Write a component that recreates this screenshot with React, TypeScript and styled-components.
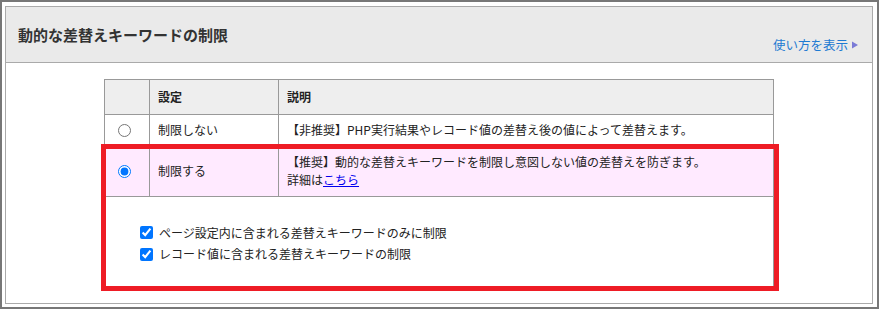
import React from "react";
import styled, { createGlobalStyle } from "styled-components";

const GlobalStyle = createGlobalStyle`
  html, body {
    margin: 0;
    background: #fff;
  }
  body {
    font-family: "Noto Sans CJK JP", "Noto Sans", sans-serif;
    color: #222;
  }
`;

const Frame = styled.div`
  width: 879px;
  height: 309px;
  box-sizing: border-box;
  border: 2px solid #777;
  padding: 4px 4px 3px 3px;
`;

const Panel = styled.section`
  height: 100%;
  box-sizing: border-box;
  border: 1px solid #aaa;
  display: flex;
  flex-direction: column;
`;

const PanelHeader = styled.header`
  height: 55px;
  flex: none;
  background: #eaeaea;
  border-bottom: 1px solid #aaa;
  display: flex;
  justify-content: space-between;
  padding: 0 14px 0 12px;
`;

const Title = styled.h2`
  margin: 0;
  align-self: center;
  font-size: 15px;
  font-weight: bold;
  color: #333;
`;

const HelpLink = styled.a`
  align-self: flex-end;
  margin-bottom: 8px;
  display: flex;
  align-items: center;
  gap: 4px;
  font-size: 12.5px;
  line-height: 18px;
  color: #1e7ad2;
  text-decoration: none;
  cursor: pointer;
`;

const PanelBody = styled.div`
  padding-top: 16px;
  display: flex;
  justify-content: center;
`;

const TableWrap = styled.div`
  position: relative;
`;

const Table = styled.table`
  width: 670px;
  table-layout: fixed;
  border-collapse: collapse;
  font-size: 12px;
  line-height: 18px;
`;

const Th = styled.th`
  background: #eee;
  border: 1px solid #999;
  padding: 8px 8px;
  text-align: left;
  font-weight: bold;
`;

const Row = styled.tr<{ $active?: boolean }>`
  background: ${(p) => (p.$active ? "#ffeaff" : "#fff")};
`;

const Td = styled.td<{ $pad?: number }>`
  border: 1px solid #999;
  padding: ${(p) => p.$pad ?? 6}px 8px;
  vertical-align: middle;
`;

const RadioCell = styled(Td)`
  padding-left: 13px;
  padding-right: 0;
`;

const Radio = styled.input`
  display: block;
  margin: 0;
  width: 13px;
  height: 13px;
`;

const OptionsCell = styled.td`
  border: 1px solid #999;
  padding: 25px 8px 21px 35px;
`;

const CheckLine = styled.label`
  display: flex;
  align-items: center;
  gap: 6px;
  height: 21.5px;
`;

const Check = styled.input`
  margin: 0;
  width: 13px;
  height: 13px;
`;

const DetailLink = styled.a`
  color: #0000ee;
  text-decoration: underline;
  cursor: pointer;
`;

const Highlight = styled.div`
  position: absolute;
  left: -3px;
  top: 65px;
  width: 678px;
  height: 147px;
  box-sizing: border-box;
  border: 5px solid #ee1c25;
  pointer-events: none;
`;

const Arrow = () => (
  <svg width="6" height="8" viewBox="0 0 6 8">
    <polygon points="0,0.5 6,4 0,7.5" fill="#7a7ad6" />
  </svg>
);

export default function App() {
  const [mode, setMode] = React.useState("limit");
  return (
    <>
      <GlobalStyle />
      <Frame>
        <Panel>
          <PanelHeader>
            <Title>動的な差替えキーワードの制限</Title>
            <HelpLink>
              使い方を表示
              <Arrow />
            </HelpLink>
          </PanelHeader>
          <PanelBody>
            <TableWrap>
              <Table>
                <colgroup>
                  <col style={{ width: 45 }} />
                  <col style={{ width: 129 }} />
                  <col />
                </colgroup>
                <thead>
                  <tr>
                    <Th />
                    <Th>設定</Th>
                    <Th>説明</Th>
                  </tr>
                </thead>
                <tbody>
                  <Row>
                    <RadioCell>
                      <Radio
                        type="radio"
                        name="mode"
                        checked={mode === "none"}
                        onChange={() => setMode("none")}
                      />
                    </RadioCell>
                    <Td>制限しない</Td>
                    <Td>【非推奨】PHP実行結果やレコード値の差替え後の値によって差替えます。</Td>
                  </Row>
                  <Row $active>
                    <RadioCell $pad={7}>
                      <Radio
                        type="radio"
                        name="mode"
                        checked={mode === "limit"}
                        onChange={() => setMode("limit")}
                      />
                    </RadioCell>
                    <Td $pad={7}>制限する</Td>
                    <Td $pad={7}>
                      【推奨】動的な差替えキーワードを制限し意図しない値の差替えを防ぎます。
                      <br />
                      詳細は<DetailLink>こちら</DetailLink>
                    </Td>
                  </Row>
                  <Row>
                    <OptionsCell colSpan={3}>
                      <CheckLine>
                        <Check type="checkbox" defaultChecked />
                        ページ設定内に含まれる差替えキーワードのみに制限
                      </CheckLine>
                      <CheckLine>
                        <Check type="checkbox" defaultChecked />
                        レコード値に含まれる差替えキーワードの制限
                      </CheckLine>
                    </OptionsCell>
                  </Row>
                </tbody>
              </Table>
              <Highlight />
            </TableWrap>
          </PanelBody>
        </Panel>
      </Frame>
    </>
  );
}
